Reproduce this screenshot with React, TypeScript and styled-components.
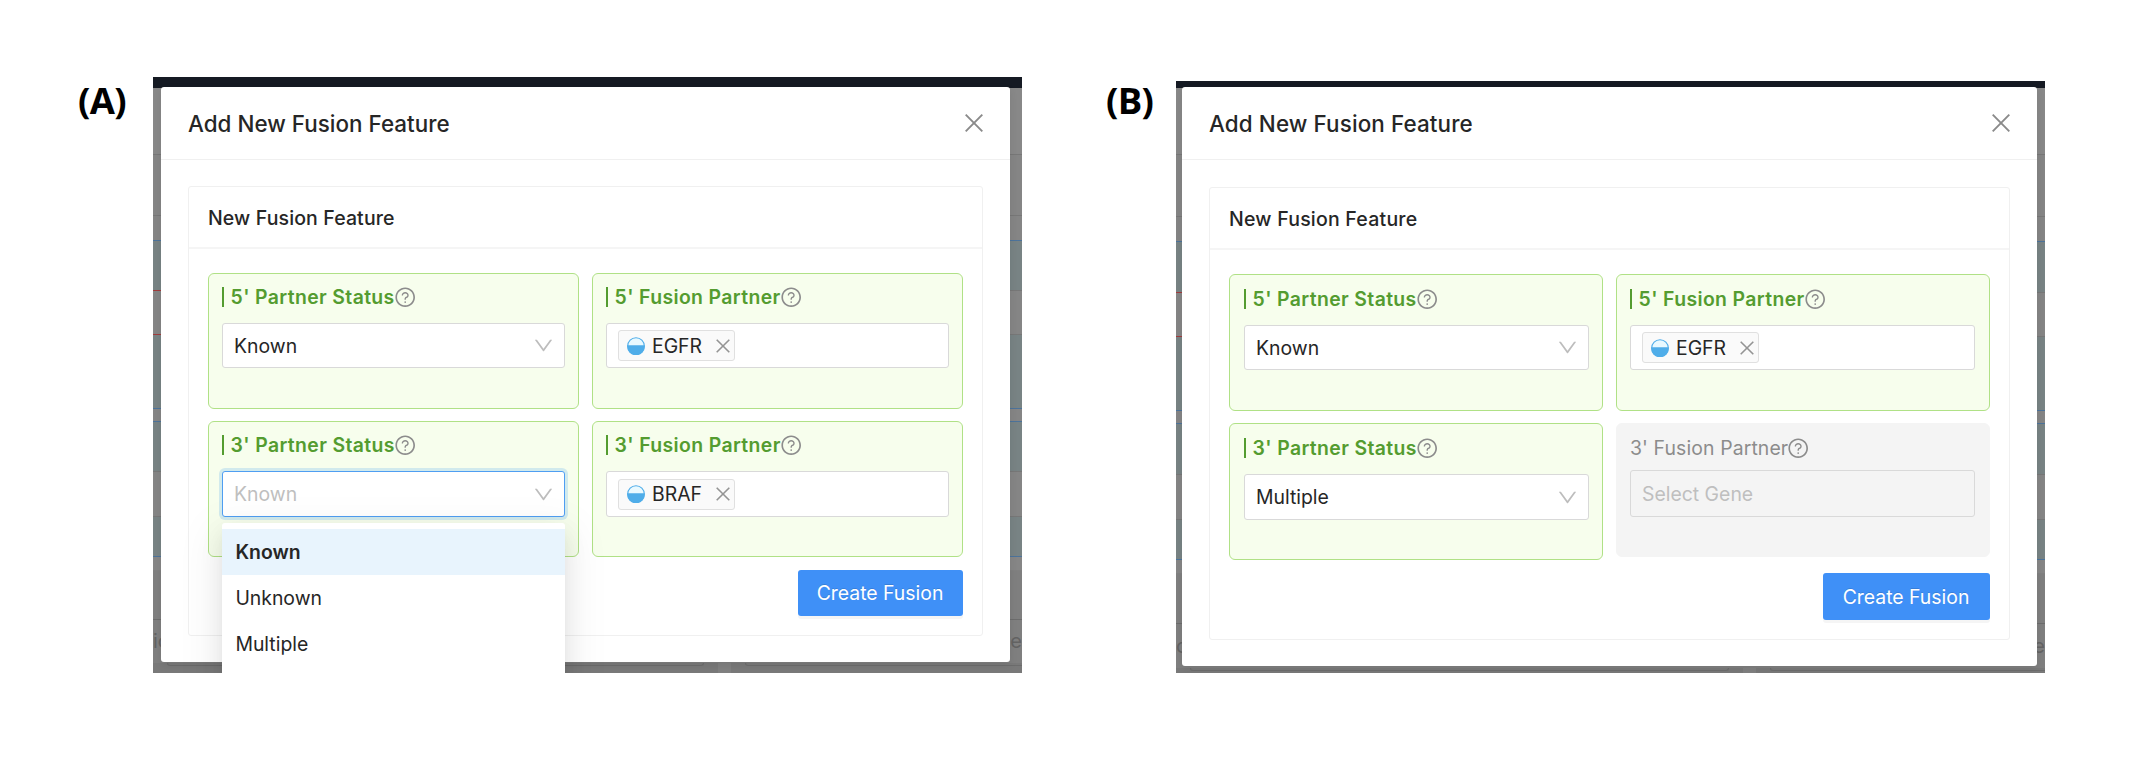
import React from "react";
import styled, { createGlobalStyle, css } from "styled-components";
import { AiOutlineQuestionCircle, AiOutlineDown } from "react-icons/ai";

const GlobalStyle = createGlobalStyle`
  * { box-sizing: border-box; }
  body {
    margin: 0;
    background: #fff;
    color: #262626;
    font-family: Inter, "Liberation Sans", sans-serif;
  }
`;

const Page = styled.main`
  display: flex;
  width: 2150px;
  height: 758px;
  padding-top: 77px;
  overflow: hidden;
`;

const Figure = styled.section<{ $width: number; $start: number }>`
  display: flex;
  align-items: flex-start;
  width: ${(p) => p.$width}px;
  padding-left: ${(p) => p.$start}px;
`;

const FigureLabel = styled.h1<{ $width: number }>`
  flex: none;
  width: ${(p) => p.$width}px;
  margin: 1px 0 0;
  padding-left: 1px;
  color: #000;
  font-family: "Open Sans", "Noto Sans", sans-serif;
  font-size: 36.5px;
  font-weight: 700;
  line-height: 44px;
  letter-spacing: -0.7px;
  white-space: nowrap;
`;

const Shot = styled.div<{ $top: number }>`
  display: grid;
  flex: none;
  width: 869px;
  height: ${(p) => 596 - p.$top}px;
  margin-top: ${(p) => p.$top}px;
  overflow: hidden;
`;

const Backdrop = styled.div`
  display: flex;
  flex-direction: column;
  grid-area: 1 / 1;
  min-height: 0;
  overflow: hidden;
  background: #767676;
`;

const Strip = styled.div<{ $h: number; $bg: string }>`
  display: flex;
  flex: none;
  align-items: center;
  justify-content: space-between;
  height: ${(p) => p.$h}px;
  background: ${(p) => p.$bg};
  color: #636363;
  font-size: 20px;
  overflow: hidden;
`;

const Rule = styled.div<{ $l: string; $r: string }>`
  flex: none;
  height: 1px;
  background: linear-gradient(90deg, ${(p) => p.$l} 50%, ${(p) => p.$r} 50%);
`;

const FooterTabs = styled.div`
  display: flex;
  flex: none;
  gap: 13px;
  height: 20px;
  background: #808080;
`;

const FooterPane = styled.div<{ $w: number }>`
  width: ${(p) => p.$w}px;
  flex: none;
  padding: 0 14px;
  background: #797979;
`;

const FooterBox = styled.div`
  height: 3px;
  border: 1px solid #6c6c6c;
  border-top: 0;
  border-radius: 0 0 3px 3px;
  background: #797979;
`;

const Modal = styled.div<{ $x: number; $y: number; $w: number; $h: number }>`
  grid-area: 1 / 1;
  width: ${(p) => p.$w}px;
  height: ${(p) => p.$h}px;
  margin: ${(p) => p.$y}px 0 0 ${(p) => p.$x}px;
  border-radius: 3px;
  background: #fff;
  box-shadow: 0 3px 8px rgba(0, 0, 0, 0.08);
`;

const ModalHeader = styled.header`
  display: flex;
  align-items: center;
  justify-content: space-between;
  height: 73px;
  padding: 0 27px;
  border-bottom: 1px solid #f0f0f0;
`;

const ModalTitle = styled.h2<{ $track: number }>`
  margin: 2px 0 0;
  font-size: 22.4px;
  font-weight: 500;
  line-height: 32px;
  letter-spacing: ${(p) => p.$track}px;
  white-space: nowrap;
`;

const Card = styled.div<{ $h: number; $top: number }>`
  height: ${(p) => p.$h}px;
  margin: ${(p) => p.$top}px 27px 0;
  border: 1px solid #f0f0f0;
  border-radius: 3px;
`;

const CardHeader = styled.div`
  display: flex;
  align-items: center;
  height: 62px;
  padding: 2px 19px 0;
  border-bottom: 2px solid #f5f5f5;
`;

const CardTitle = styled.h3<{ $track: number }>`
  margin: 0;
  font-size: 19.5px;
  font-weight: 500;
  letter-spacing: ${(p) => p.$track}px;
  white-space: nowrap;
`;

const CardBody = styled.div<{ $top: number }>`
  padding: ${(p) => p.$top}px 19px 0;
`;

const FieldGrid = styled.div<{ $col: number; $row: number }>`
  display: grid;
  grid-template-columns: repeat(2, ${(p) => p.$col}px);
  grid-auto-rows: ${(p) => p.$row}px;
  align-items: start;
  gap: 12px 13px;
`;

const Field = styled.div<{ $disabled?: boolean; $h: number; $pad: string }>`
  display: flex;
  flex-direction: column;
  height: ${(p) => p.$h}px;
  padding: ${(p) => p.$pad};
  border: 1px solid #b0e186;
  border-radius: 6px;
  background: #f7feed;
  ${(p) =>
    p.$disabled &&
    css`
      border-color: #f4f4f4;
      background: #f4f4f4;
    `}
`;

const FieldLabel = styled.div<{ $disabled?: boolean; $gap: number }>`
  display: flex;
  align-items: center;
  height: 20px;
  margin-bottom: ${(p) => p.$gap}px;
  padding-left: ${(p) => (p.$disabled ? 0 : 6.6)}px;
  border-left: ${(p) => (p.$disabled ? "0" : "2px solid #549c30")};
  color: ${(p) => (p.$disabled ? "#8c8c8c" : "#549c30")};
  font-size: 19.4px;
  font-weight: ${(p) => (p.$disabled ? 400 : 600)};
  letter-spacing: ${(p) => (p.$disabled ? 0.12 : 0.37)}px;
  white-space: nowrap;

  svg {
    flex: none;
    margin-left: -1px;
    color: #8c8c8c;
  }
`;

const Control = styled.div<{ $h: number; $open?: boolean; $disabled?: boolean }>`
  position: relative;
  display: flex;
  flex: none;
  align-items: center;
  justify-content: space-between;
  height: ${(p) => p.$h}px;
  padding: 0 12px 0 11px;
  border: 1px solid #d9d9d9;
  border-radius: 3px;
  background: ${(p) => (p.$disabled ? "#f4f4f4" : "#fff")};
  ${(p) =>
    p.$open &&
    css`
      border-color: #4f9ef2;
      box-shadow: 0 0 0 3px rgba(24, 134, 240, 0.17);
    `}
`;

const Value = styled.span<{ $muted?: boolean }>`
  color: ${(p) => (p.$muted ? "#bfbfbf" : "#262626")};
  font-size: 19.4px;
  white-space: nowrap;
`;

const Arrow = styled(AiOutlineDown)`
  flex: none;
  margin-right: -3px;
  color: #bdbdbd;
  font-size: 23px;
`;

const Tag = styled.span`
  display: flex;
  align-items: center;
  height: 31px;
  padding: 0 4px 0 8px;
  border: 1px solid #e0e0e0;
  border-radius: 3px;
  background: #fafafa;
`;

const TagText = styled(Value)`
  margin: 0 13.5px 0 7px;
`;

const Menu = styled.div`
  position: absolute;
  top: 51px;
  left: -1px;
  z-index: 1;
  width: 343px;
  height: 220px;
  padding-top: 6px;
  border-radius: 3px;
  background: #fff;
  box-shadow: 0 4px 9px -6px rgba(0, 0, 0, 0.12), 0 9px 23px rgba(0, 0, 0, 0.08),
    0 13px 40px 11px rgba(0, 0, 0, 0.05);
`;

const Option = styled.div<{ $selected?: boolean }>`
  display: flex;
  align-items: center;
  height: 46px;
  padding-left: 13.4px;
  background: ${(p) => (p.$selected ? "#e8f4fd" : "#fff")};
  font-size: 19.4px;
  font-weight: ${(p) => (p.$selected ? 600 : 400)};
`;

const Actions = styled.div<{ $top: number }>`
  display: flex;
  justify-content: flex-end;
  margin-top: ${(p) => p.$top}px;
`;

const Button = styled.button<{ $w: number; $h: number }>`
  width: ${(p) => p.$w}px;
  height: ${(p) => p.$h}px;
  padding: 0 1px 0 0;
  border: 0;
  border-radius: 3px;
  background: #3f90f7;
  box-shadow: 0 3px 0 rgba(0, 0, 0, 0.04);
  color: #fff;
  font: 400 19.4px Inter, sans-serif;
  text-shadow: 0 -1px 0 rgba(0, 0, 0, 0.12);
  white-space: nowrap;
`;

const Cross = ({ size, color, width }: { size: number; color: string; width: number }) => (
  <svg width={size} height={size} viewBox={`0 0 ${size} ${size}`} fill="none">
    <path d={`M.7 .7L${size - 0.7} ${size - 0.7}M${size - 0.7} .7L.7 ${size - 0.7}`} stroke={color} strokeWidth={width} />
  </svg>
);

const HalfDisc = () => (
  <svg width="18" height="18" viewBox="0 0 18 18">
    <circle cx="9" cy="9" r="8.3" fill="#e9f9ff" stroke="#4fade9" strokeWidth="1.1" />
    <path d="M.3 8.2H17.7A8.8 8.8 0 1 1 .3 8.2Z" fill="#4fade9" />
  </svg>
);

const Label = ({ text, gap, disabled }: { text: string; gap: number; disabled?: boolean }) => (
  <FieldLabel $gap={gap} $disabled={disabled}>
    <span>{text}</span>
    <AiOutlineQuestionCircle size={22.4} />
  </FieldLabel>
);

const GeneTag = ({ name }: { name: string }) => (
  <Tag>
    <HalfDisc />
    <TagText>{name}</TagText>
    <Cross size={14} color="#949494" width={1.6} />
  </Tag>
);

type StripSpec = [height: number, background: string, left: string, right: string, texts?: [string, string]];

const GREY = "#858585";
const TEAL = "#788384";
const LINE = "#777777";
const BLUE = "#4c739b";
const RED = "#a13c3c";

const stripsA: StripSpec[] = [
  [66, "#888888", LINE, LINE],
  [60, GREY, LINE, LINE],
  [24, GREY, BLUE, BLUE],
  [49, TEAL, RED, LINE],
  [43, GREY, RED, LINE],
  [73, TEAL, BLUE, BLUE],
  [12, GREY, BLUE, BLUE],
  [49, TEAL, LINE, LINE],
  [44, GREY, LINE, LINE],
  [39, TEAL, BLUE, BLUE],
  [13, "#868686", "#808080", "#808080"],
  [48, "#7f7f7f", "#6c6c6c", "#6c6c6c"],
  [42, "#7f7f7f", "#7f7f7f", "#7f7f7f", ["io", "ce"]],
];

const stripsB: StripSpec[] = [
  [66, "#888888", LINE, LINE],
  [61, GREY, LINE, LINE],
  [24, GREY, BLUE, BLUE],
  [50, TEAL, RED, LINE],
  [43, GREY, RED, LINE],
  [73, TEAL, BLUE, BLUE],
  [12, GREY, BLUE, BLUE],
  [50, TEAL, LINE, LINE],
  [44, GREY, LINE, LINE],
  [39, TEAL, BLUE, BLUE],
  [13, "#868686", "#808080", "#808080"],
  [49, "#7f7f7f", "#6c6c6c", "#6c6c6c"],
  [43, "#7f7f7f", "#7f7f7f", "#7f7f7f", ["o", "ce"]],
];

const PageBehind = ({ bar, strips, pane }: { bar: number; strips: StripSpec[]; pane: number }) => (
  <Backdrop>
    <Strip $h={bar} $bg="#151a23" />
    {strips.map(([h, bg, left, right, texts], i) => (
      <React.Fragment key={i}>
        <Strip $h={h} $bg={bg}>
          {texts?.map((t) => <span key={t}>{t}</span>)}
        </Strip>
        <Rule $l={left} $r={right} />
      </React.Fragment>
    ))}
    <FooterTabs>
      <FooterPane $w={pane}>
        <FooterBox />
      </FooterPane>
      <FooterPane $w={600}>
        <FooterBox />
      </FooterPane>
    </FooterTabs>
  </Backdrop>
);

export default function App() {
  return (
    <>
      <GlobalStyle />
      <Page>
        <Figure $width={1105} $start={77}>
          <FigureLabel $width={76}>(A)</FigureLabel>
          <Shot $top={0}>
            <PageBehind bar={11} strips={stripsA} pane={565} />
            <Modal $x={8} $y={10} $w={849} $h={575}>
              <ModalHeader>
                <ModalTitle $track={0.02}>Add New Fusion Feature</ModalTitle>
                <Cross size={18} color="#8a8a8a" width={1.9} />
              </ModalHeader>
              <Card $h={450} $top={26}>
                <CardHeader>
                  <CardTitle $track={0.12}>New Fusion Feature</CardTitle>
                </CardHeader>
                <CardBody $top={24}>
                  <FieldGrid $col={371} $row={136}>
                    <Field $h={136} $pad="13px 13px 0">
                      <Label text="5' Partner Status" gap={16} />
                      <Control $h={45}>
                        <Value>Known</Value>
                        <Arrow />
                      </Control>
                    </Field>
                    <Field $h={136} $pad="13px 13px 0">
                      <Label text="5' Fusion Partner" gap={16} />
                      <Control $h={45}>
                        <GeneTag name="EGFR" />
                      </Control>
                    </Field>
                    <Field $h={136} $pad="13px 13px 0">
                      <Label text="3' Partner Status" gap={16} />
                      <Control $h={46} $open>
                        <Value $muted>Known</Value>
                        <Arrow />
                        <Menu>
                          <Option $selected>Known</Option>
                          <Option>Unknown</Option>
                          <Option>Multiple</Option>
                        </Menu>
                      </Control>
                    </Field>
                    <Field $h={136} $pad="13px 13px 0">
                      <Label text="3' Fusion Partner" gap={16} />
                      <Control $h={46}>
                        <GeneTag name="BRAF" />
                      </Control>
                    </Field>
                  </FieldGrid>
                  <Actions $top={13}>
                    <Button $w={165} $h={46}>Create Fusion</Button>
                  </Actions>
                </CardBody>
              </Card>
            </Modal>
          </Shot>
        </Figure>
        <Figure $width={1045} $start={0}>
          <FigureLabel $width={71}>(B)</FigureLabel>
          <Shot $top={4}>
            <PageBehind bar={7} strips={stripsB} pane={567} />
            <Modal $x={6} $y={6} $w={855} $h={579}>
              <ModalHeader>
                <ModalTitle $track={0.12}>Add New Fusion Feature</ModalTitle>
                <Cross size={18} color="#8a8a8a" width={1.9} />
              </ModalHeader>
              <Card $h={453} $top={27}>
                <CardHeader>
                  <CardTitle $track={0.22}>New Fusion Feature</CardTitle>
                </CardHeader>
                <CardBody $top={24}>
                  <FieldGrid $col={374} $row={137}>
                    <Field $h={137} $pad="14px 13px 0 14px">
                      <Label text="5' Partner Status" gap={16} />
                      <Control $h={45}>
                        <Value>Known</Value>
                        <Arrow />
                      </Control>
                    </Field>
                    <Field $h={137} $pad="14px 14px 0 13px">
                      <Label text="5' Fusion Partner" gap={16} />
                      <Control $h={45}>
                        <GeneTag name="EGFR" />
                      </Control>
                    </Field>
                    <Field $h={137} $pad="14px 13px 0 14px">
                      <Label text="3' Partner Status" gap={16} />
                      <Control $h={46}>
                        <Value>Multiple</Value>
                        <Arrow />
                      </Control>
                    </Field>
                    <Field $h={134} $pad="14px 14px 0 13px" $disabled>
                      <Label text="3' Fusion Partner" gap={12} disabled />
                      <Control $h={47} $disabled>
                        <Value $muted>Select Gene</Value>
                      </Control>
                    </Field>
                  </FieldGrid>
                  <Actions $top={13}>
                    <Button $w={167} $h={47}>Create Fusion</Button>
                  </Actions>
                </CardBody>
              </Card>
            </Modal>
          </Shot>
        </Figure>
      </Page>
    </>
  );
}
